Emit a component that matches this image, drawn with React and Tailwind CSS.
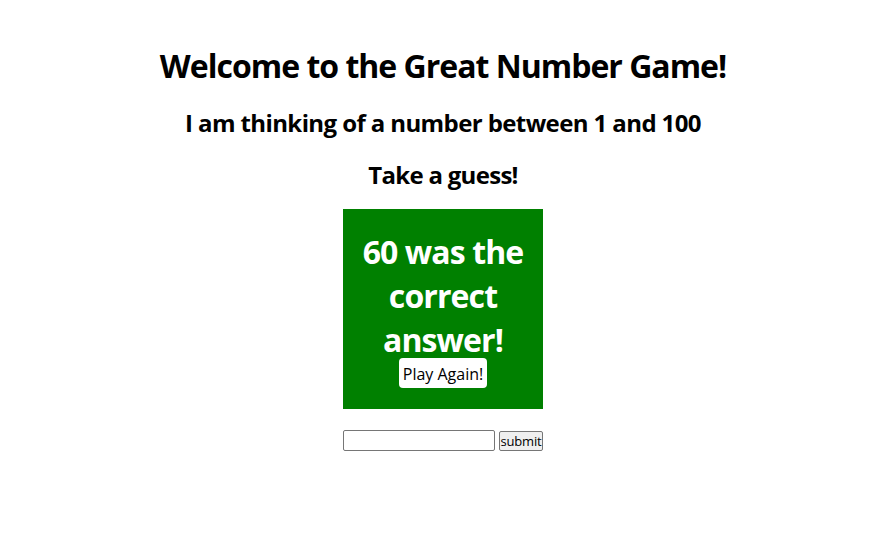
export default function App() {
  return (
    <div className="min-h-screen bg-white text-black font-['Open_Sans','Noto_Sans',sans-serif]">
      <div className="flex flex-col items-center pl-[9px] text-center">
        <h1 className="mt-[44px] text-[32px] font-bold leading-[44px] tracking-[-1px]">
          Welcome to the Great Number Game!
        </h1>
        <h2 className="mt-[19px] text-[24px] font-bold leading-[32px] tracking-[-0.6px]">
          I am thinking of a number between 1 and 100
        </h2>
        <h2 className="mt-[20px] text-[24px] font-bold leading-[32px] tracking-[-0.7px]">
          Take a guess!
        </h2>

        <div className="mt-[18px] flex h-[200px] w-[200px] flex-col items-center bg-[#008000] pt-[21px] text-white">
          <div className="text-[32px] font-bold leading-[44px] tracking-[-0.9px]">
            60 was the
            <br />
            correct
            <br />
            answer!
          </div>
          <button className="mt-[-4px] h-[30px] w-[88px] rounded-[4px] bg-white pt-[1px] text-[16px] text-black">
            Play Again!
          </button>
        </div>

        <form className="mt-[21px] flex items-start gap-[4px]" onSubmit={(e) => e.preventDefault()}>
          <input
            type="text"
            className="h-[21px] w-[152px] rounded-[2px] border border-[#767676] px-1 text-[13px]"
          />
          <button className="mt-[1px] h-[20px] w-[44px] rounded-[2px] border border-[#767676] bg-[#efefef] px-0 text-[13px] leading-none tracking-[-0.2px] text-black">
            submit
          </button>
        </form>
      </div>
    </div>
  );
}
